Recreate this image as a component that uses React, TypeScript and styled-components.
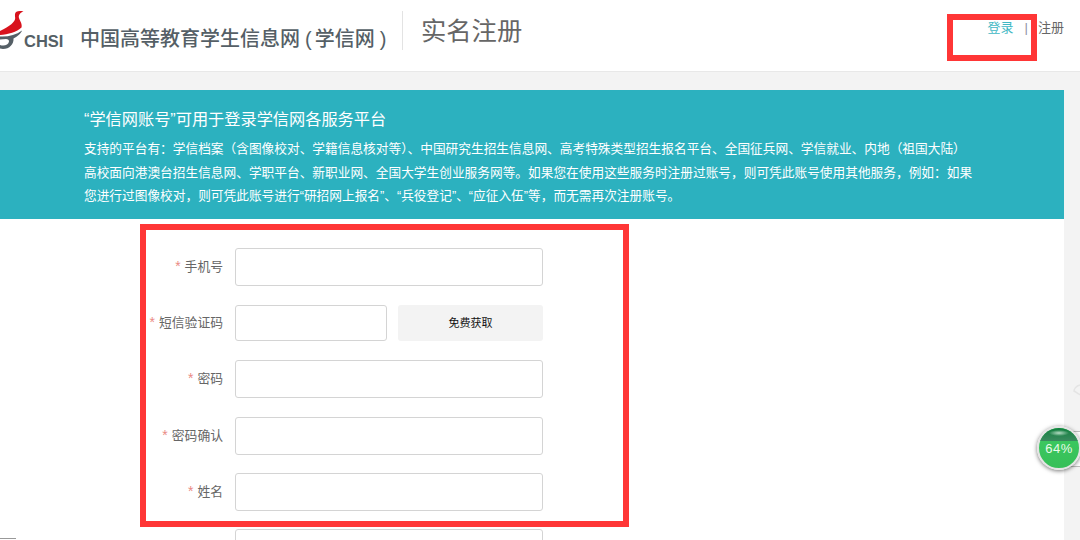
import React from 'react';
import styled, { createGlobalStyle } from 'styled-components';

const GlobalStyle = createGlobalStyle`
  html, body {
    margin: 0;
    padding: 0;
    height: 540px;
    overflow: hidden;
    background: #f3f3f3;
    font-family: "Liberation Sans", "Noto Sans CJK SC", sans-serif;
  }
`;

type Field = { label: string; short?: boolean };

const fields: Field[] = [
  { label: '手机号' },
  { label: '短信验证码', short: true },
  { label: '密码' },
  { label: '密码确认' },
  { label: '姓名' },
];

const Logo = () => (
  <LogoBox>
    <svg width="24" height="60" viewBox="0 0 24 60">
      <path
        d="M23.5 11.5 C21 11 18 10.8 16 12 C14.5 13.5 15 16 15.2 18 C15.2 22 10 26 0 31 L0 35 C8 34.5 17 32 21.5 27.5 C22.5 24 20 21 19 18 C18.3 15.5 19.5 13 23.5 11.5Z"
        fill="#d8131d"
      />
      <path
        d="M0 36.5 C8 37 16 35 22 30.5 C21 33.5 17 37 13.5 38.5 C14 44 9.5 49 3 49 L0 48.5 L0 45 C4 46.5 8.5 45 9 41.5 C9.2 40 8 39 6 39 L0 39.5Z"
        fill="#555f66"
      />
    </svg>
    <LogoText>CHSI</LogoText>
  </LogoBox>
);

const App: React.FC = () => {
  return (
    <Wrapper>
      <GlobalStyle />
      <Header>
        <Logo />
        <SiteName>
          中国高等教育学生信息网<Paren>(</Paren>学信网<Paren>)</Paren>
        </SiteName>
        <PageTitle>实名注册</PageTitle>
        <TopLinks>
          <LoginLink>登录</LoginLink>
          <Divider>|</Divider>
          <RegisterLink>注册</RegisterLink>
        </TopLinks>
      </Header>
      <Main>
        <Banner>
          <BannerTitle>“学信网账号”可用于登录学信网各服务平台</BannerTitle>
          <BannerLine>支持的平台有：学信档案（含图像校对、学籍信息核对等）、中国研究生招生信息网、高考特殊类型招生报名平台、全国征兵网、学信就业、内地（祖国大陆）</BannerLine>
          <BannerLine>高校面向港澳台招生信息网、学职平台、新职业网、全国大学生创业服务网等。如果您在使用这些服务时注册过账号，则可凭此账号使用其他服务，例如：如果</BannerLine>
          <BannerLine>您进行过图像校对，则可凭此账号进行“研招网上报名”、“兵役登记”、“应征入伍”等，而无需再次注册账号。</BannerLine>
        </Banner>
        <FormPanel>
          {fields.map((f) => (
            <Row key={f.label}>
              <Label>
                <Star>*</Star>
                {f.label}
              </Label>
              <Input $short={f.short} />
              {f.short && <SmsButton>免费获取</SmsButton>}
            </Row>
          ))}
          <Row>
            <Label />
            <Input />
          </Row>
          <BottomDash />
        </FormPanel>
      </Main>
      <LoginMark />
      <FormMark />
      <SideArc viewBox="0 0 8 12" width="8" height="12">
        <path d="M7 1 C3 2 1 5 1 7 C3 8 5 10 8 11" fill="none" stroke="#e4e4e4" strokeWidth="1.5" />
      </SideArc>
      <SideTab />
      <Gauge>
        <GaugeTop />
        <GaugeText>64%</GaugeText>
      </Gauge>
    </Wrapper>
  );
};

export default App;

const Wrapper = styled.div`
  position: relative;
  width: 1080px;
  height: 540px;
  overflow: hidden;
  background: #f3f3f3;
`;

const Header = styled.header`
  height: 71px;
  background: #fff;
  border-bottom: 1px solid #e8e8e8;
  display: flex;
  align-items: flex-start;
`;

const LogoBox = styled.div`
  width: 80px;
  height: 60px;
  display: flex;
  align-items: flex-start;
  flex-shrink: 0;
`;

const LogoText = styled.span`
  margin-top: 32px;
  font: bold 16.5px/19px "Liberation Sans", sans-serif;
  color: #555f66;
`;

const SiteName = styled.div`
  margin-top: 25px;
  width: 322px;
  flex-shrink: 0;
  font-size: 20px;
  line-height: 28px;
  color: #555f66;
  white-space: nowrap;
  font-weight: 500;
`;

const Paren = styled.span`
  margin: 0 3px 0 5px;
`;

const PageTitle = styled.div`
  margin-top: 11px;
  height: 39px;
  padding-left: 18px;
  border-left: 1px solid #e3e3e3;
  font-size: 25.3px;
  line-height: 40px;
  color: #666;
  white-space: nowrap;
`;

const TopLinks = styled.div`
  margin: 19px 16px 0 auto;
  display: flex;
  font-size: 13px;
  line-height: 18px;
`;

const LoginLink = styled.span`
  color: #3fb8c4;
`;

const Divider = styled.span`
  color: #8f8fa3;
  margin: 0 10px 0 11px;
`;

const RegisterLink = styled.span`
  color: #666;
`;

const Main = styled.main`
  width: 1064px;
  margin-top: 18px;
`;

const Banner = styled.section`
  height: 129px;
  box-sizing: border-box;
  background: #2cb1bf;
  padding: 18px 0 0 84px;
  color: #fff;
`;

const BannerTitle = styled.div`
  font-size: 16.2px;
  line-height: 23px;
  margin-bottom: 7px;
  white-space: nowrap;
`;

const BannerLine = styled.div`
  font-size: 12.7px;
  line-height: 23.5px;
  white-space: nowrap;
`;

const FormPanel = styled.section`
  position: relative;
  height: 321px;
  background: #fff;
  padding-top: 29px;
  box-sizing: border-box;
`;

const Row = styled.div`
  display: flex;
  align-items: center;
  height: 38px;
  margin-bottom: 18.2px;
`;

const Label = styled.div`
  width: 223px;
  margin-right: 12px;
  padding-bottom: 3px;
  flex-shrink: 0;
  box-sizing: border-box;
  text-align: right;
  font-size: 12.8px;
  color: #666;
`;

const Star = styled.span`
  color: #ea8a84;
  font-size: 14px;
  margin-right: 4px;
`;

const Input = styled.div<{ $short?: boolean }>`
  width: ${(p) => (p.$short ? 152 : 308)}px;
  height: ${(p) => (p.$short ? 36 : 38)}px;
  box-sizing: border-box;
  background: #fff;
  border: 1px solid #d4d4d4;
  border-radius: 3px;
  flex-shrink: 0;
`;

const SmsButton = styled.div`
  width: 145px;
  height: 36px;
  margin-left: 11px;
  background: #f3f3f3;
  border-radius: 3px;
  font-size: 11px;
  line-height: 36px;
  text-align: center;
  color: #111;
`;

const BottomDash = styled.div`
  position: absolute;
  left: 0;
  bottom: 1px;
  width: 16px;
  height: 1px;
  background: #999;
`;

const LoginMark = styled.div`
  position: absolute;
  left: 947px;
  top: 14px;
  width: 90px;
  height: 47px;
  box-sizing: border-box;
  border: 6px solid #ff3636;
`;

const FormMark = styled.div`
  position: absolute;
  left: 140px;
  top: 224px;
  width: 489px;
  height: 303px;
  box-sizing: border-box;
  border: 6px solid #ff3636;
`;

const SideArc = styled.svg`
  position: absolute;
  left: 1073px;
  top: 384px;
`;

const SideTab = styled.div`
  position: absolute;
  left: 1060px;
  top: 431px;
  width: 24px;
  height: 36px;
  box-sizing: border-box;
  border: 1px solid #bdbdbd;
  background: #fff;
`;

const Gauge = styled.div`
  position: absolute;
  left: 1037px;
  top: 426px;
  width: 44px;
  height: 44px;
  box-sizing: border-box;
  border-radius: 50%;
  border: 2px solid #e4e4e4;
  background: linear-gradient(#3ecb62, #36bf58);
  box-shadow: 0 1px 4px rgba(0, 0, 0, 0.55);
  overflow: hidden;
`;

const GaugeTop = styled.div`
  height: 13px;
  background: radial-gradient(ellipse 10px 3px at 50% 5px, #b5dcc4, transparent), linear-gradient(#12803f, #3b8a5f);
`;

const GaugeText = styled.div`
  font: 13px/15px "Liberation Sans", sans-serif;
  letter-spacing: 0.5px;
  text-align: center;
  color: #e9fbe9;
`;
